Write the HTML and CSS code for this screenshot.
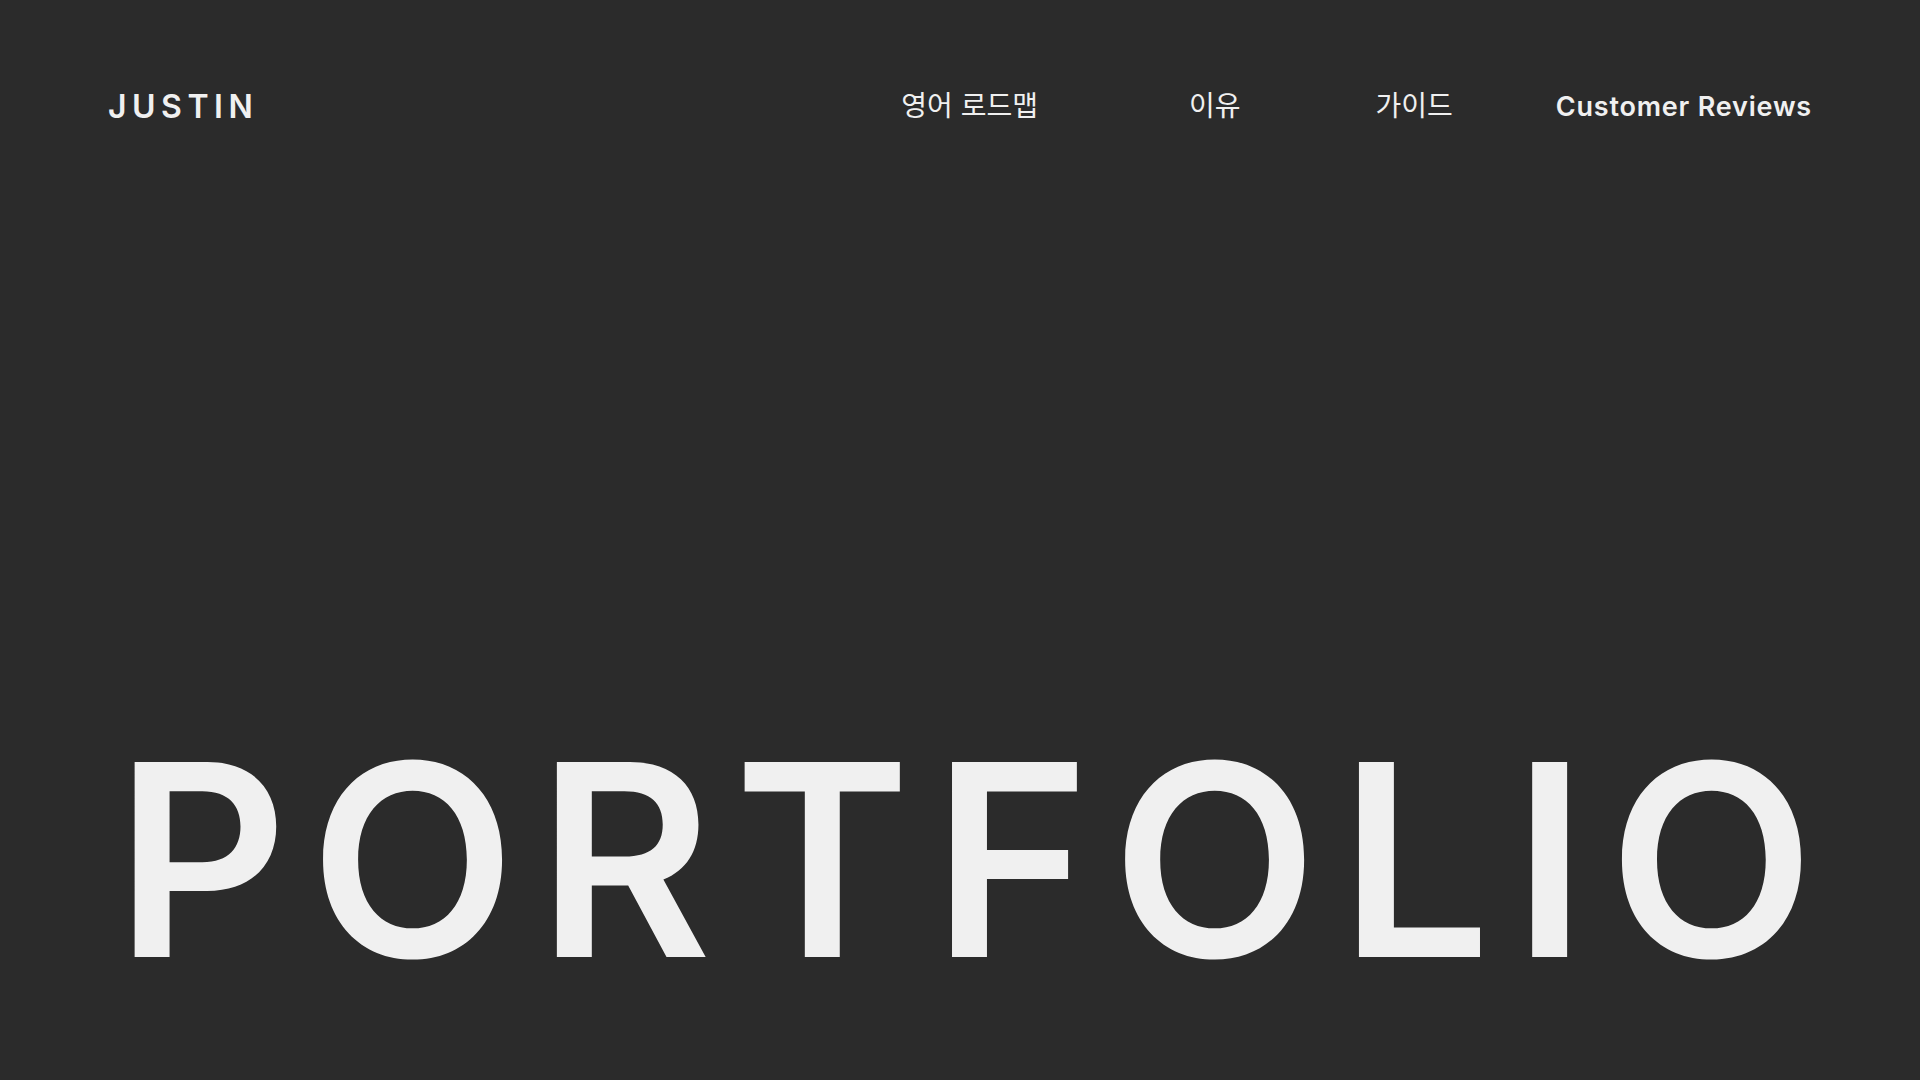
FILE: index.html
```html
<!DOCTYPE html>
<html lang="ko">
<head>
<meta charset="utf-8">
<title>JUSTIN Portfolio</title>
<link rel="stylesheet" href="styles.css">
</head>
<body>
<div class="page">
  <header class="header">
    <div class="logo">JUSTIN</div>
    <nav class="nav">
      <a class="nav-item nav-roadmap" href="#">영어 로드맵</a>
      <a class="nav-item nav-why" href="#">이유</a>
      <a class="nav-item nav-guide" href="#">가이드</a>
      <a class="nav-item nav-reviews" href="#">Customer Reviews</a>
    </nav>
  </header>
  <main class="hero">
    <h1 class="title">PORTFOLIO</h1>
  </main>
</div>
</body>
</html>
```

FILE: styles.css
```css
* { box-sizing: border-box; }
html, body { margin: 0; padding: 0; }
body {
  background: #2b2b2b;
  color: #f0f0f0;
  font-family: "Inter", "Noto Sans CJK KR", sans-serif;
}
.page {
  height: 100vh;
  display: flex;
  flex-direction: column;
  overflow: hidden;
}
.header {
  display: flex;
  align-items: center;
  justify-content: space-between;
  height: 212px;
  padding: 0 108px;
}
.logo {
  font-family: "Inter", sans-serif;
  font-weight: 600;
  font-size: 32px;
  letter-spacing: 5.5px;
  margin-right: -5.5px;
}
.nav {
  display: flex;
  align-items: center;
}
.nav-item {
  color: #f0f0f0;
  text-decoration: none;
  font-family: "Noto Sans CJK KR", sans-serif;
  font-size: 28px;
  font-weight: 400;
  position: relative;
  top: -2px;
}
.nav-why { margin-left: 151px; }
.nav-guide { margin-left: 135px; }
.nav-reviews {
  margin-left: 103px;
  top: 0;
  font-family: "Inter", sans-serif;
  font-weight: 600;
  font-size: 27px;
  letter-spacing: 0.8px;
}
.hero {
  flex: 1;
  display: flex;
  align-items: flex-end;
  padding: 0 0 86px 115px;
}
.title {
  margin: 0;
  font-family: "Inter", sans-serif;
  font-weight: 600;
  font-size: 268px;
  line-height: 1;
  letter-spacing: 21.7px;
  color: #f0f0f0;
}
```
